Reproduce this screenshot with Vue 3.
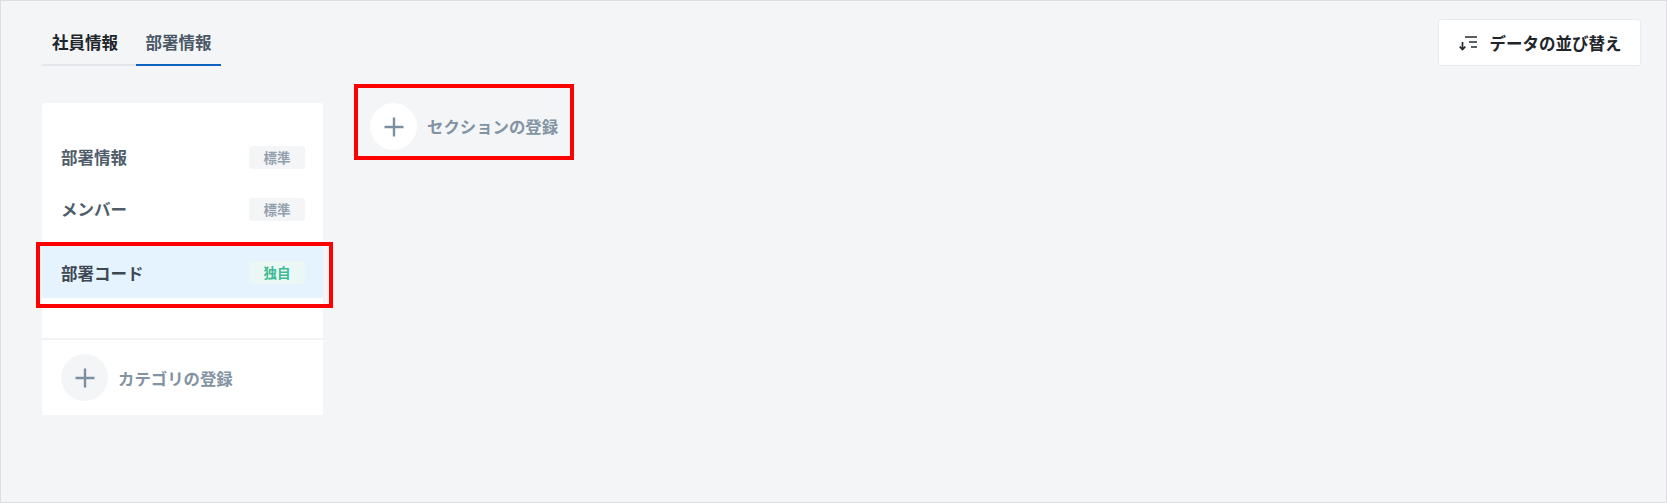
<script setup>
const rows = [
  { name: '部署情報', tag: '標準' },
  { name: 'メンバー', tag: '標準' },
  { name: '部署コード', tag: '独自', active: true },
]
</script>

<template>
  <div class="page">
    <header class="top">
      <nav class="tabs">
        <span class="tab first">社員情報</span>
        <span class="tab current">部署情報</span>
      </nav>
      <button class="sort">
        <svg width="20" height="16" viewBox="0 0 20 16" fill="none" stroke="#222b33" stroke-width="1.7">
          <path d="M4.5 7v7.5M1.7 11.7l2.8 2.8 2.8-2.8" />
          <path d="M7 2h12M11 7h8M13 12h6" />
        </svg>
        データの並び替え
      </button>
    </header>
    <main class="body">
      <aside class="card">
        <ul class="list">
          <li v-for="r in rows" :key="r.name" class="row" :class="{ active: r.active }">
            <span>{{ r.name }}</span>
            <span class="tag">{{ r.tag }}</span>
          </li>
        </ul>
        <div class="add card-add">
          <span class="circle grey"><svg width="22" height="22" viewBox="0 0 22 22"><path d="M11 1.5v19M1.5 11h19" stroke="#7c8fa1" stroke-width="2.4" /></svg></span>
          <span>カテゴリの登録</span>
        </div>
      </aside>
      <div class="add section-add">
        <span class="circle"><svg width="22" height="22" viewBox="0 0 22 22"><path d="M11 1.5v19M1.5 11h19" stroke="#7c8fa1" stroke-width="2.4" /></svg></span>
        <span class="section-label">セクションの登録</span>
      </div>
    </main>
    <div class="mark mark-a"></div>
    <div class="mark mark-b"></div>
  </div>
</template>

<style scoped>
.page {
  position: relative;
  box-sizing: border-box;
  width: 1667px;
  height: 503px;
  padding: 0 25px 0 41px;
  background: #f4f5f7;
  border: 1px solid #dcdee2;
  font-family: "Noto Sans CJK JP", "Noto Sans", sans-serif;
  font-size: 16.5px;
  font-weight: 700;
  overflow: hidden;
}
.top {
  display: flex;
  justify-content: space-between;
  align-items: flex-start;
}
.tabs {
  display: flex;
  width: 179px;
  height: 65px;
  box-sizing: border-box;
  border-bottom: 2px solid #e3e6ec;
}
.tab {
  padding: 0 9.5px;
  height: 65px;
  line-height: 82px;
  box-sizing: border-box;
  color: #1e252b;
}
.tab.first {
  padding: 0 18px 0 10px;
}
.tab.current {
  color: #4a5866;
  border-bottom: 2px solid #0d62c0;
}
.sort {
  display: flex;
  align-items: center;
  justify-content: center;
  gap: 12px;
  margin-top: 18px;
  width: 203px;
  height: 47px;
  padding: 0;
  border: 1px solid #e9ebef;
  border-radius: 3px;
  background: #fff;
  font: inherit;
  color: #1e252b;
}
.body {
  display: flex;
  align-items: flex-start;
  gap: 30px;
  margin-top: 37px;
}
.card {
  width: 281px;
  height: 312px;
  display: flex;
  flex-direction: column;
  background: #fff;
  border-radius: 2px;
}
.list {
  list-style: none;
  margin: 0;
  padding: 28px 0 0;
  height: 238px;
  box-sizing: border-box;
  border-bottom: 2px solid #f1f2f4;
}
.row {
  display: flex;
  align-items: center;
  justify-content: space-between;
  height: 52px;
  padding: 0 18px 0 19px;
  color: #4f5d6b;
}
.row.active {
  margin-top: 11px;
  background: #e5f3fe;
  color: #3d4852;
}
.row.active > span:first-child {
  padding-top: 2px;
}
.tag {
  width: 56px;
  height: 23px;
  line-height: 23px;
  text-align: center;
  border-radius: 3px;
  background: #f4f5f7;
  color: #93a0ad;
  font-size: 13.5px;
}
.active .tag {
  background: #ebf7f5;
  color: #3dbb94;
}
.add {
  display: flex;
  align-items: center;
  gap: 10px;
  color: #8293a3;
  font-size: 16.4px;
}
.card-add {
  padding: 14px 19px;
}
.section-add {
  padding-left: 17px;
}
.section-label {
  padding-bottom: 2px;
}
.circle {
  display: flex;
  align-items: center;
  justify-content: center;
  flex: none;
  width: 47px;
  height: 47px;
  border-radius: 50%;
  background: #fff;
}
.circle.grey {
  background: #f4f5f7;
}
.mark {
  position: absolute;
  box-sizing: border-box;
  border: 4px solid #fe0000;
}
.mark-a {
  left: 35px;
  top: 241px;
  width: 297px;
  height: 66px;
}
.mark-b {
  left: 353px;
  top: 83px;
  width: 220px;
  height: 76px;
}
</style>
